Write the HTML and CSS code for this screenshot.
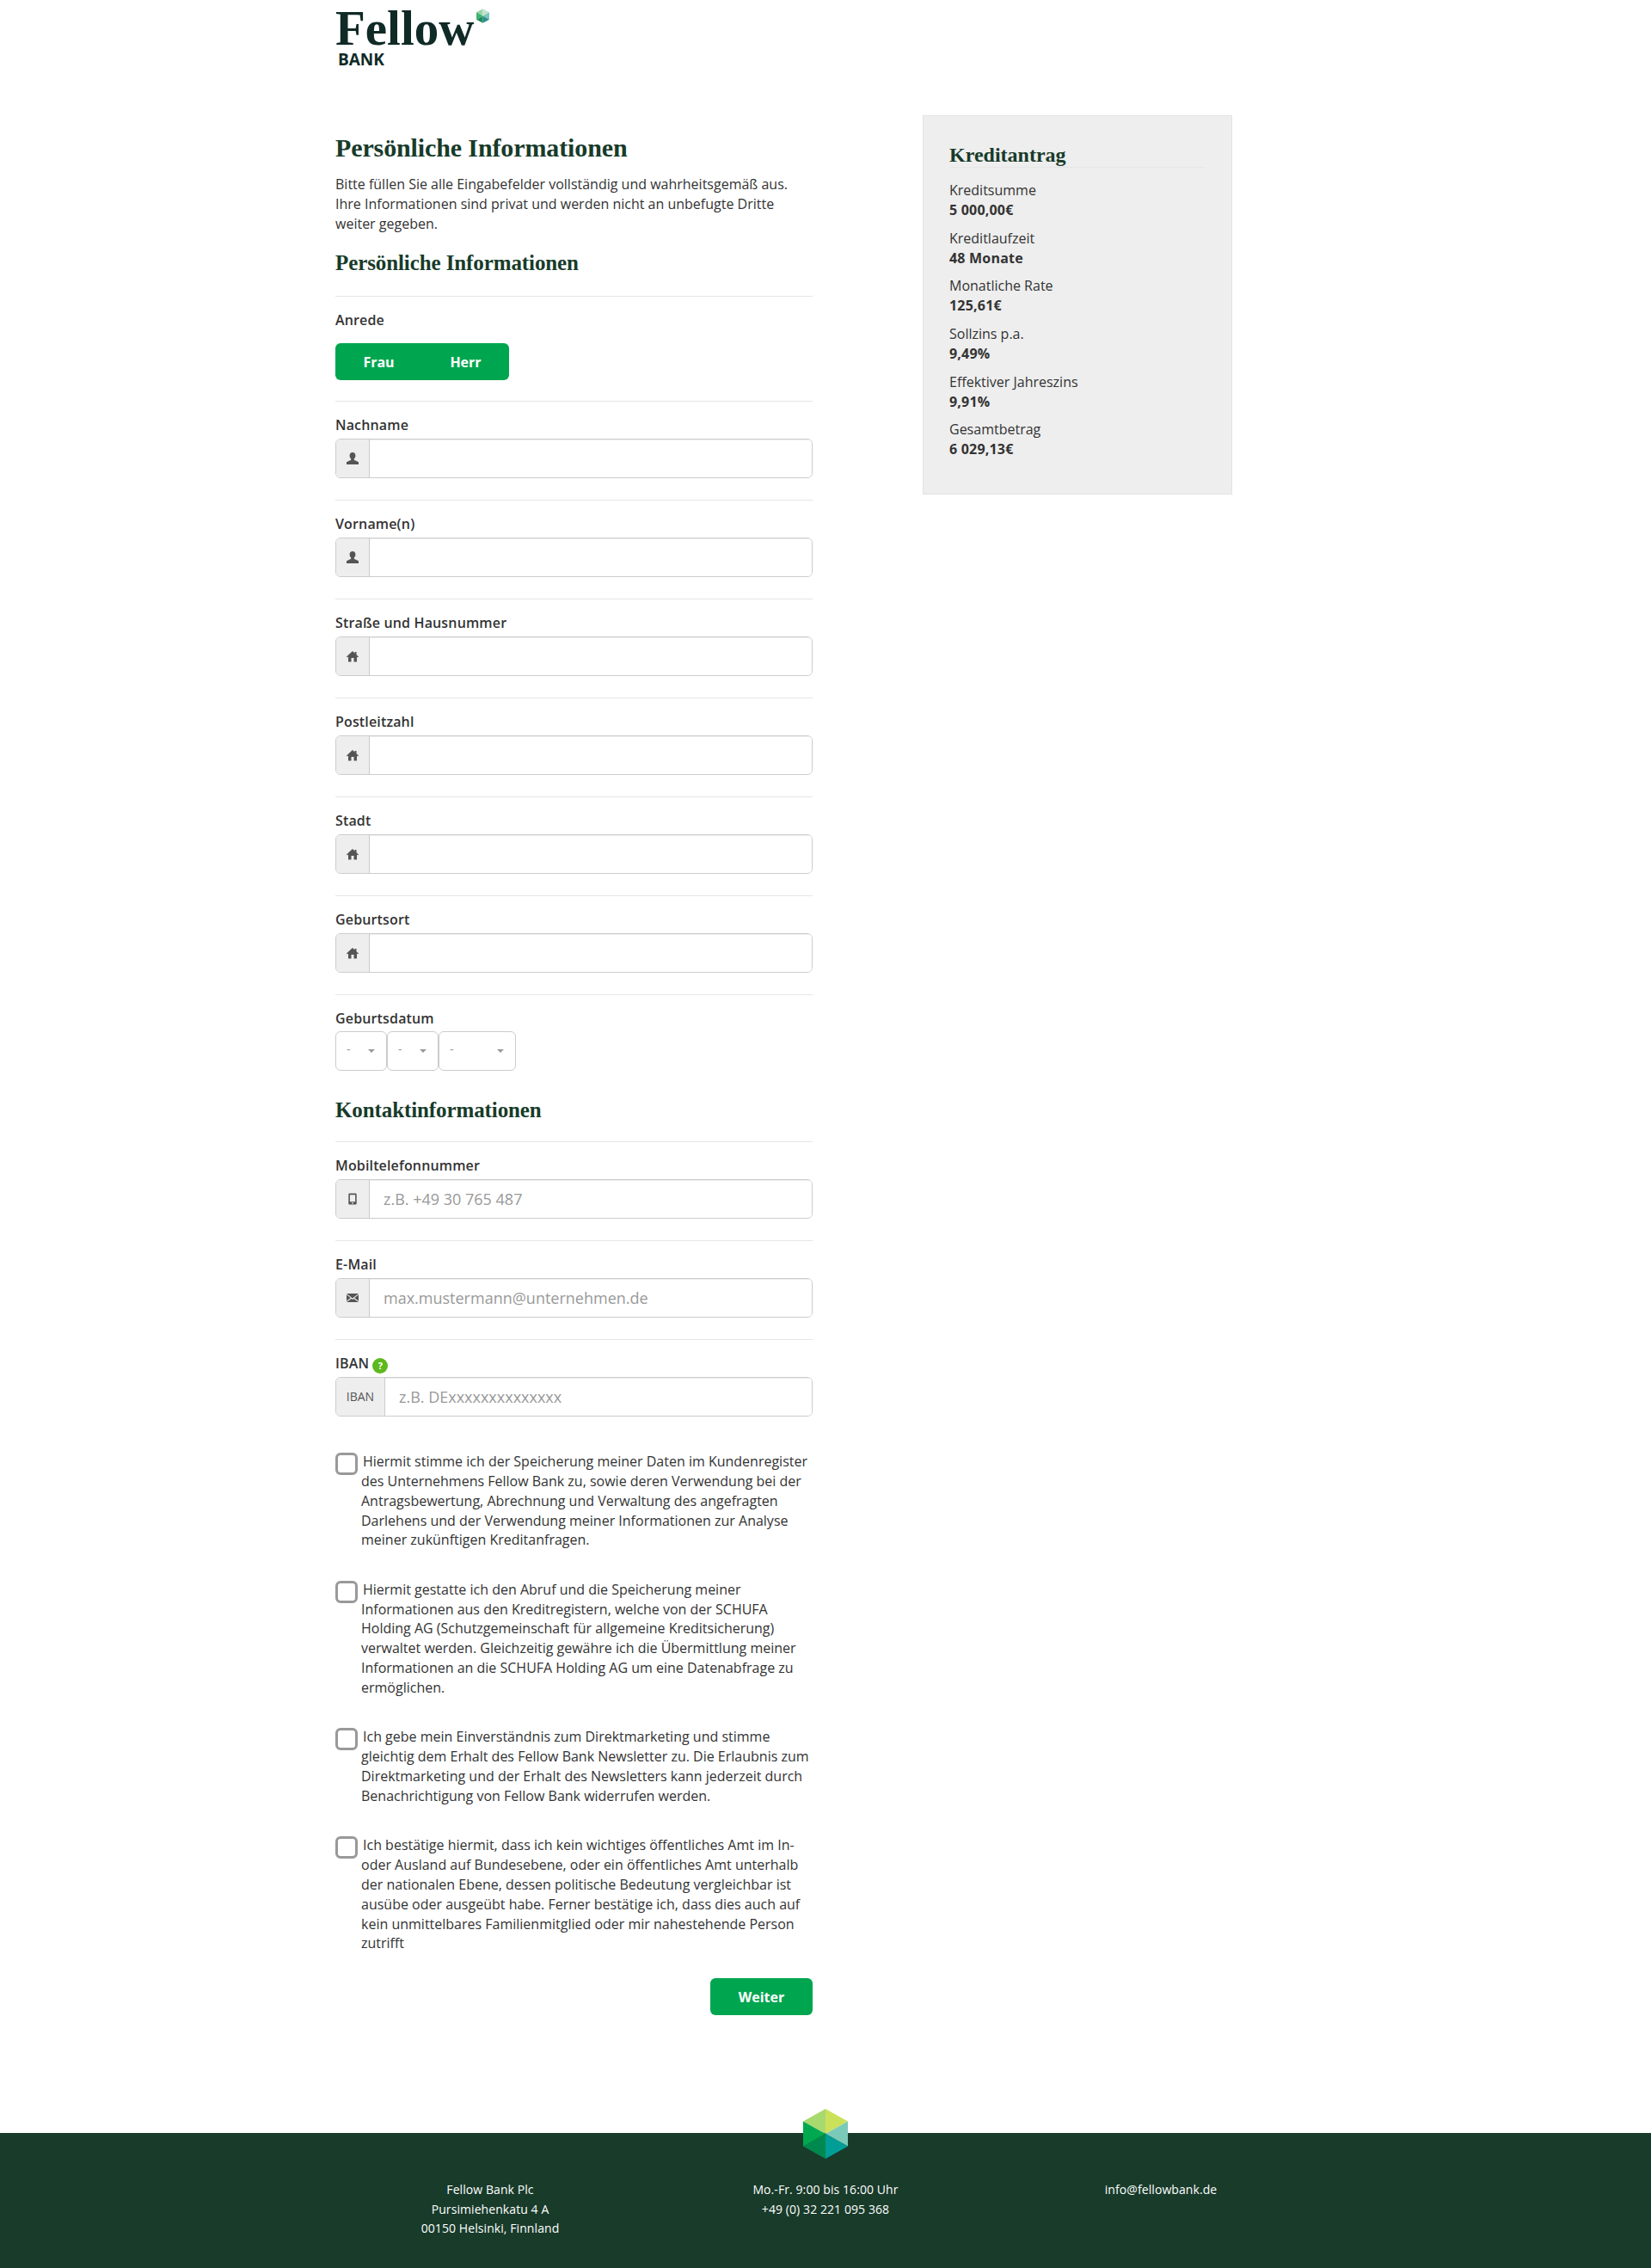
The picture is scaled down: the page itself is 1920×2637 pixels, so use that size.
FILE: index.html
```html
<!doctype html>
<html lang="de">
  <head>
    <meta charset="UTF-8" />
    <meta name="viewport" content="width=device-width, initial-scale=1.0" />
    <title>Fellow Bank</title>
    <link rel="stylesheet" href="styles.css">
  </head>
  <body>
    <svg class="icon-defs" width="0" height="0">
      <symbol id="i-user" viewBox="0 0 16 16">
        <path d="M8 1c-2.2 0-3.4 1.6-3.4 3.8 0 1.6.7 3 1.6 3.7v1.3L1 12.2V15h14v-2.8l-5.2-2.4V8.5c.9-.7 1.6-2.1 1.6-3.7C11.400 2.600 10.200 1 8 1z"/>
      </symbol>
      <symbol id="i-home" viewBox="0 0 16 16">
        <path d="M8 2 1 8.500l.8.9L3 8.400V14.500h3.500v-4.500h3v4.500H13V8.400l1.200 1 .8-.9-2.500-2.300V3h-2v1.400z"/>
      </symbol>
      <symbol id="i-phone" viewBox="0 0 16 16">
        <path fill-rule="evenodd" d="M4.500 1.500h7a1.200 1.200 0 0 1 1.200 1.200v10.600a1.200 1.200 0 0 1-1.200 1.200h-7a1.200 1.200 0 0 1-1.200-1.200V2.700a1.200 1.200 0 0 1 1.200-1.200zM4.900 3.200v8h6.200v-8zM8 11.900a.9.9 0 1 0 0 1.800.9.9 0 0 0 0-1.800z"/>
      </symbol>
      <symbol id="i-mail" viewBox="0 0 16 16">
        <path d="M1 3h14L8 8.600zM1 4.200v7.600L5.800 8zM15 4.200v7.600L10.200 8zM1 13h14L9.400 8.900 8 10 6.600 8.900z"/>
      </symbol>
    </svg>

    <header class="site-header">
      <div class="logo">
        <div class="logo-top">
          <span class="logo-name">Fellow</span>
          <svg class="logo-hex" viewBox="0 0 52 58">
            <polygon points="26,0 26,29 0,14.5" fill="#9bd3a8"/>
            <polygon points="26,0 52,14.5 26,29" fill="#c3e3cf"/>
            <polygon points="52,14.5 52,43.5 26,29" fill="#7fc4bb"/>
            <polygon points="52,43.5 26,58 26,29" fill="#2a8f8d"/>
            <polygon points="26,58 0,43.5 26,29" fill="#1f8c58"/>
            <polygon points="0,43.5 0,14.5 26,29" fill="#3fb370"/>
          </svg>
        </div>
        <div class="logo-bank">BANK</div>
      </div>
    </header>

    <div class="page">
      <main class="main-col">
        <h1>Persönliche Informationen</h1>
        <p class="intro">Bitte füllen Sie alle Eingabefelder vollständig und wahrheitsgemäß aus. Ihre Informationen sind privat und werden nicht an unbefugte Dritte weiter gegeben.</p>

        <h2>Persönliche Informationen</h2>
        <div class="field field-first">
          <label class="field-label">Anrede</label>
          <div class="toggle">
            <button class="toggle-btn">Frau</button>
            <button class="toggle-btn">Herr</button>
          </div>
        </div>
        <div class="field">
          <label class="field-label">Nachname</label>
          <div class="input-group">
            <span class="addon"><svg class="icon"><use href="#i-user"/></svg></span>
            <input type="text" />
          </div>
        </div>
        <div class="field">
          <label class="field-label">Vorname(n)</label>
          <div class="input-group">
            <span class="addon"><svg class="icon"><use href="#i-user"/></svg></span>
            <input type="text" />
          </div>
        </div>
        <div class="field">
          <label class="field-label">Straße und Hausnummer</label>
          <div class="input-group">
            <span class="addon"><svg class="icon"><use href="#i-home"/></svg></span>
            <input type="text" />
          </div>
        </div>
        <div class="field">
          <label class="field-label">Postleitzahl</label>
          <div class="input-group">
            <span class="addon"><svg class="icon"><use href="#i-home"/></svg></span>
            <input type="text" />
          </div>
        </div>
        <div class="field">
          <label class="field-label">Stadt</label>
          <div class="input-group">
            <span class="addon"><svg class="icon"><use href="#i-home"/></svg></span>
            <input type="text" />
          </div>
        </div>
        <div class="field">
          <label class="field-label">Geburtsort</label>
          <div class="input-group">
            <span class="addon"><svg class="icon"><use href="#i-home"/></svg></span>
            <input type="text" />
          </div>
        </div>
        <div class="field field-last">
          <label class="field-label">Geburtsdatum</label>
          <div class="date-row">
            <div class="date-select"><span>-</span><i class="caret"></i></div>
            <div class="date-select"><span>-</span><i class="caret"></i></div>
            <div class="date-select date-year"><span>-</span><i class="caret"></i></div>
          </div>
        </div>

        <h2 class="contact-title">Kontaktinformationen</h2>
        <div class="field">
          <label class="field-label">Mobiltelefonnummer</label>
          <div class="input-group">
            <span class="addon"><svg class="icon"><use href="#i-phone"/></svg></span>
            <input type="text" placeholder="z.B. +49 30 765 487" />
          </div>
        </div>
        <div class="field">
          <label class="field-label">E-Mail</label>
          <div class="input-group">
            <span class="addon"><svg class="icon"><use href="#i-mail"/></svg></span>
            <input type="text" placeholder="max.mustermann@unternehmen.de" />
          </div>
        </div>
        <div class="field field-last">
          <label class="field-label">IBAN <span class="help">?</span></label>
          <div class="input-group">
            <span class="addon addon-text">IBAN</span>
            <input type="text" placeholder="z.B. DExxxxxxxxxxxxxx" />
          </div>
        </div>

        <div class="consents">
          <label class="consent">
            <input type="checkbox" />
            <span>Hiermit stimme ich der Speicherung meiner Daten im Kundenregister des Unternehmens Fellow Bank zu, sowie deren Verwendung bei der Antragsbewertung, Abrechnung und Verwaltung des angefragten Darlehens und der Verwendung meiner Informationen zur Analyse meiner zukünftigen Kreditanfragen.</span>
          </label>
          <label class="consent">
            <input type="checkbox" />
            <span>Hiermit gestatte ich den Abruf und die Speicherung meiner Informationen aus den Kreditregistern, welche von der SCHUFA Holding AG (Schutzgemeinschaft für allgemeine Kreditsicherung) verwaltet werden. Gleichzeitig gewähre ich die Übermittlung meiner Informationen an die SCHUFA Holding AG um eine Datenabfrage zu ermöglichen.</span>
          </label>
          <label class="consent">
            <input type="checkbox" />
            <span>Ich gebe mein Einverständnis zum Direktmarketing und stimme gleichtig dem Erhalt des Fellow Bank Newsletter zu. Die Erlaubnis zum Direktmarketing und der Erhalt des Newsletters kann jederzeit durch Benachrichtigung von Fellow Bank widerrufen werden.</span>
          </label>
          <label class="consent">
            <input type="checkbox" />
            <span>Ich bestätige hiermit, dass ich kein wichtiges öffentliches Amt im In- oder Ausland auf Bundesebene, oder ein öffentliches Amt unterhalb der nationalen Ebene, dessen politische Bedeutung vergleichbar ist ausübe oder ausgeübt habe. Ferner bestätige ich, dass dies auch auf kein unmittelbares Familienmitglied oder mir nahestehende Person zutrifft</span>
          </label>
        </div>

        <div class="actions">
          <button class="next-btn">Weiter</button>
        </div>
      </main>

      <aside class="summary">
        <h3>Kreditantrag</h3>
        <div class="summary-item">Kreditsumme<strong>5 000,00€</strong></div>
        <div class="summary-item">Kreditlaufzeit<strong>48 Monate</strong></div>
        <div class="summary-item">Monatliche Rate<strong>125,61€</strong></div>
        <div class="summary-item">Sollzins p.a.<strong>9,49%</strong></div>
        <div class="summary-item">Effektiver Jahreszins<strong>9,91%</strong></div>
        <div class="summary-item">Gesamtbetrag<strong>6 029,13€</strong></div>
      </aside>
    </div>

    <footer class="site-footer">
      <svg class="footer-hex" viewBox="0 0 52 58">
        <polygon points="26,0 26,29 0,14.5" fill="#a8d96f"/>
        <polygon points="26,0 52,14.5 26,29" fill="#cbe15a"/>
        <polygon points="52,14.5 52,43.5 26,29" fill="#7bc9b8"/>
        <polygon points="52,43.5 26,58 26,29" fill="#009e96"/>
        <polygon points="26,58 0,43.5 26,29" fill="#00894f"/>
        <polygon points="0,43.5 0,14.5 26,29" fill="#00a94f"/>
      </svg>
      <div class="footer-cols">
        <div>Fellow Bank Plc<br />Pursimiehenkatu 4 A<br />00150 Helsinki, Finnland</div>
        <div>Mo.-Fr. 9:00 bis 16:00 Uhr<br />+49 (0) 32 221 095 368</div>
        <div>info@fellowbank.de</div>
      </div>
    </footer>
  </body>
</html>
```

FILE: styles.css
```css
body {
  font-family: "Open Sans", Arial, sans-serif;
  font-size: 16px;
  line-height: 1.42857;
  color: #333;
  margin: 0;
  padding: 0;
  background: #fff;
}

.icon-defs {
  position: absolute;
}

.site-header {
  width: 1140px;
  height: 129px;
  margin: 0 auto;
  padding-top: 5px;
}

.logo-top {
  display: flex;
  align-items: flex-start;
}

.logo-name {
  font-family: "Liberation Serif", serif;
  font-weight: 700;
  font-size: 57px;
  line-height: 56px;
  color: #102a26;
}

.logo-hex {
  width: 15px;
  height: 17px;
  margin-top: 5px;
  margin-left: 3px;
}

.logo-bank {
  font-weight: 700;
  font-size: 19px;
  line-height: 20px;
  color: #102a26;
  margin: -2px 0 0 3px;
}

.page {
  display: flex;
  align-items: flex-start;
  width: 1140px;
  margin: 0 auto;
}

.main-col {
  width: 555px;
  padding-top: 21px;
}

h1,
h2,
.summary h3 {
  font-family: "Liberation Serif", serif;
  font-weight: 700;
  color: #183b2a;
  margin: 0;
}

h1 {
  font-size: 30px;
  line-height: 33px;
  letter-spacing: -0.12px;
  margin-bottom: 15px;
}

.intro {
  margin: 0 0 20px;
}

h2 {
  font-size: 25px;
  line-height: 28px;
  letter-spacing: -0.1px;
  margin-bottom: 24px;
}

.contact-title {
  margin-top: 32px;
  margin-bottom: 22px;
}

.field {
  border-top: 1px solid #e6e6e6;
  padding: 16px 0 25px;
}

.field-first {
  padding-bottom: 24px;
}

.field-last {
  padding-bottom: 0;
}

.field-label {
  display: block;
  height: 22.86px;
  font-weight: 600;
  letter-spacing: 0.15px;
  margin-bottom: 4px;
}

.toggle {
  display: flex;
  width: 202px;
  height: 43px;
  margin-top: 16px;
  background: #00a64f;
  border-radius: 6px;
}

.toggle-btn,
.next-btn {
  font-family: inherit;
  font-size: 16px;
  font-weight: 700;
  color: #fff;
  background: #00a64f;
  border: none;
  cursor: pointer;
}

.toggle-btn {
  flex: 1;
  background: none;
  padding: 0;
}

.input-group {
  display: flex;
  height: 46px;
  box-sizing: border-box;
  border: 1px solid #ccc;
  border-radius: 6px;
  overflow: hidden;
}

.addon {
  display: flex;
  align-items: center;
  justify-content: center;
  flex: none;
  width: 38px;
  background: #eee;
  border-right: 1px solid #ccc;
  color: #555;
}

.addon-text {
  width: 56px;
  font-size: 14px;
}

.icon {
  width: 16px;
  height: 16px;
  fill: #555;
}

.input-group input {
  flex: 1;
  min-width: 0;
  border: none;
  outline: none;
  padding: 0 16px;
  font-family: inherit;
  font-size: 18px;
  color: #555;
  box-shadow: inset 0 1px 1px rgba(0, 0, 0, 0.075);
}

.input-group input::placeholder {
  color: #999;
}

.help {
  display: inline-block;
  width: 18px;
  height: 18px;
  border-radius: 50%;
  background: #5cb81e;
  color: #fff;
  font-size: 11px;
  font-weight: 700;
  line-height: 18px;
  text-align: center;
  vertical-align: -1px;
}

.date-row {
  display: flex;
}

.date-select {
  display: flex;
  justify-content: space-between;
  align-items: center;
  box-sizing: border-box;
  width: 60px;
  height: 46px;
  padding: 0 13px 0 12px;
  border: 1px solid #ccc;
  border-radius: 6px;
  color: #999;
  font-size: 14px;
}

.date-select span {
  margin-top: -4px;
}

.date-year {
  width: 90px;
}

.caret {
  border-top: 4px solid #999;
  border-left: 4px solid transparent;
  border-right: 4px solid transparent;
}

.consents {
  margin-top: 41px;
}

.consent {
  display: flex;
  margin-bottom: 34.5px;
}

.consent:last-child {
  margin-bottom: 0;
}

.consent input {
  appearance: none;
  flex: none;
  box-sizing: border-box;
  width: 26px;
  height: 26px;
  margin: 1px 4px 0 0;
  border: 3px solid #999;
  border-radius: 6px;
  background: #fff;
}

.consent span {
  text-indent: 2px;
}

.actions {
  display: flex;
  justify-content: flex-end;
  margin-top: 29px;
  margin-bottom: 137px;
}

.next-btn {
  width: 119px;
  height: 43px;
  border-radius: 6px;
}

.summary {
  box-sizing: border-box;
  width: 360px;
  margin-left: 128px;
  padding: 32px 30px 30px;
  background: #eee;
  border: 1px solid #e3e3e3;
}

.summary h3 {
  font-size: 24px;
  line-height: 26px;
  padding-bottom: 1px;
  margin-bottom: 15px;
  border-bottom: 1px solid #e6e6e6;
}

.summary-item {
  margin-bottom: 10px;
}

.summary-item strong {
  display: block;
  font-weight: 700;
  letter-spacing: 0.2px;
}

.site-footer {
  position: relative;
  height: 158px;
  background: #183b2a;
  color: #fff;
  font-size: 14px;
  letter-spacing: 0.08px;
  line-height: 22.5px;
}

.footer-hex {
  position: absolute;
  left: 934px;
  top: -28px;
  width: 52px;
  height: 58px;
}

.footer-cols {
  display: grid;
  grid-template-columns: repeat(3, 390px);
  width: 1170px;
  margin: 0 auto;
  padding-top: 55px;
  text-align: center;
}
```
